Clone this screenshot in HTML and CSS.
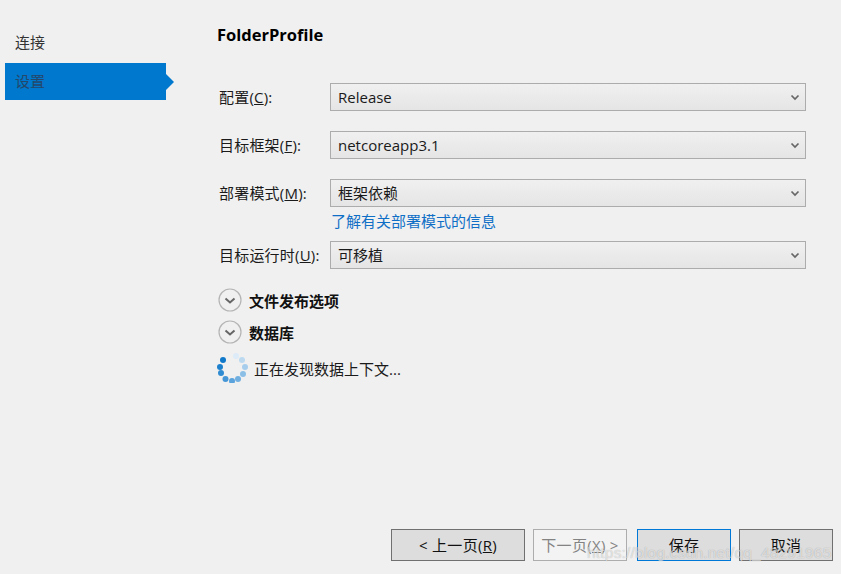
FILE: index.html
```html
<!DOCTYPE html>
<html lang="zh-CN">
<head>
<meta charset="utf-8">
<title>FolderProfile</title>
<link rel="stylesheet" href="styles.css">
</head>
<body>
<div class="app">
  <div class="content">
    <nav class="sidebar">
      <div class="nav-item">连接</div>
      <div class="nav-item active">设置</div>
    </nav>
    <main class="main">
      <h1 class="title">FolderProfile</h1>
      <div class="form">
        <div class="row">
          <label class="label">配置(<u>C</u>):</label>
          <div class="select"><span>Release</span><svg class="chev" width="10" height="7" viewBox="0 0 10 7"><path d="M1.500 1.500 5 5 8.500 1.500" fill="none" stroke="#666" stroke-width="1.700"/></svg></div>
        </div>
        <div class="row">
          <label class="label">目标框架(<u>F</u>):</label>
          <div class="select"><span>netcoreapp3.1</span><svg class="chev" width="10" height="7" viewBox="0 0 10 7"><path d="M1.500 1.500 5 5 8.500 1.500" fill="none" stroke="#666" stroke-width="1.700"/></svg></div>
        </div>
        <div class="row">
          <label class="label">部署模式(<u>M</u>):</label>
          <div class="select"><span class="cjk">框架依赖</span><svg class="chev" width="10" height="7" viewBox="0 0 10 7"><path d="M1.500 1.500 5 5 8.500 1.500" fill="none" stroke="#666" stroke-width="1.700"/></svg></div>
        </div>
        <a class="info-link">了解有关部署模式的信息</a>
        <div class="row">
          <label class="label">目标运行时(<u>U</u>):</label>
          <div class="select"><span class="cjk">可移植</span><svg class="chev" width="10" height="7" viewBox="0 0 10 7"><path d="M1.500 1.500 5 5 8.500 1.500" fill="none" stroke="#666" stroke-width="1.700"/></svg></div>
        </div>
      </div>
      <div class="expander first">
        <svg class="exp-icon" width="24" height="24" viewBox="0 0 24 24"><circle cx="12" cy="12" r="11" fill="none" stroke="#b4b4b4" stroke-width="1.200"/><path d="M7.500 10.500 12 14.500 16.500 10.500" fill="none" stroke="#666" stroke-width="2"/></svg>
        <span>文件发布选项</span>
      </div>
      <div class="expander">
        <svg class="exp-icon" width="24" height="24" viewBox="0 0 24 24"><circle cx="12" cy="12" r="11" fill="none" stroke="#b4b4b4" stroke-width="1.200"/><path d="M7.500 10.500 12 14.500 16.500 10.500" fill="none" stroke="#666" stroke-width="2"/></svg>
        <span>数据库</span>
      </div>
      <div class="status">
        <svg class="spinner" width="32" height="30" viewBox="0 0 32 30">
          <circle cx="19" cy="3" r="3" fill="#dcebf7"/>
          <circle cx="25" cy="7" r="3" fill="#bcd9f0"/>
          <circle cx="28" cy="14" r="3" fill="#a6cdec"/>
          <circle cx="26" cy="21" r="3" fill="#8cbfe6"/>
          <circle cx="21" cy="26" r="3" fill="#70afe0"/>
          <circle cx="15" cy="28" r="3" fill="#5aa3dc"/>
          <circle cx="8.500" cy="26" r="3" fill="#4496d7"/>
          <circle cx="4" cy="20" r="3" fill="#2f8bd2"/>
          <circle cx="3" cy="14" r="3" fill="#1d80cd"/>
          <circle cx="6" cy="7" r="3" fill="#0f78c8"/>
        </svg>
        <span>正在发现数据上下文...</span>
      </div>
    </main>
  </div>
  <footer class="footer">
    <button class="btn prev"><span>&lt; 上一页(<u>R</u>)</span></button>
    <button class="btn next" disabled><span>下一页(<u>X</u>) &gt;</span></button>
    <button class="btn save"><span>保存</span></button>
    <button class="btn cancel"><span>取消</span></button>
  </footer>
  <div class="watermark">https://blog.csdn.net/qq_48291965</div>
</div>
</body>
</html>
```
FILE: styles.css
```css
* { box-sizing: border-box; }
html, body { margin: 0; padding: 0; }
body {
  background: #f0f0f0;
  color: #1a1a1a;
  font-family: "Open Sans", "Noto Sans CJK SC", sans-serif;
  font-size: 15px;
  overflow: hidden;
}
.app {
  position: relative;
  width: 841px;
  height: 574px;
  display: flex;
  flex-direction: column;
  overflow: hidden;
}
.content { flex: 1; display: flex; min-height: 0; }
.sidebar {
  width: 219px;
  flex: none;
  padding: 24px 0 0 5px;
  display: flex;
  flex-direction: column;
  gap: 2px;
}
.nav-item {
  position: relative;
  width: 161px;
  height: 37px;
  line-height: 37px;
  padding-left: 10px;
  color: #333;
  font-size: 15px;
}
.nav-item.active { background: #0078cd; color: #24476a; }
.nav-item.active::after {
  content: "";
  position: absolute;
  left: 100%;
  top: 11px;
  border-left: 8px solid #0078cd;
  border-top: 8px solid transparent;
  border-bottom: 8px solid transparent;
}
.main { flex: 1; min-width: 0; display: flex; flex-direction: column; }
.title {
  margin: 23px 0 0 -2px;
  height: 24px;
  line-height: 24px;
  font-size: 16.500px;
  font-weight: 700;
  color: #000;
}
.form { margin-top: 36px; width: 587px; display: flex; flex-direction: column; }
.row { display: flex; align-items: center; height: 28px; margin-bottom: 20px; }
.label { width: 111px; flex: none; font-size: 15px; white-space: nowrap; letter-spacing: 0.2px; padding-bottom: 2px; }
.select {
  flex: 1;
  height: 28px;
  border: 1px solid #acacac;
  background: linear-gradient(#f0f0f0, #e5e5e5);
  display: flex;
  align-items: center;
  justify-content: space-between;
  padding: 0 5px 0 7px;
  font-size: 15px;
}
.cjk { padding-bottom: 2px; }
.info-link {
  margin: -18px 0 8px 112px;
  height: 24px;
  line-height: 24px;
  color: #0f6fc6;
  font-size: 15px;
}
.expander {
  display: flex;
  align-items: center;
  gap: 7px;
  height: 26px;
  margin: 0 0 6px -1px;
  font-weight: 700;
  font-size: 15px;
  color: #111;
}
.expander.first { margin-top: -2px; }
.status {
  display: flex;
  align-items: center;
  gap: 5px;
  margin: 2px 0 0 -2px;
  height: 30px;
  font-size: 15px;
}
.footer {
  flex: none;
  height: 45px;
  padding: 0 8px 0 391px;
  display: flex;
  align-items: flex-start;
}
.btn {
  height: 32px;
  border: 1px solid #707070;
  background: #dddddd;
  font: inherit;
  font-size: 15px;
  letter-spacing: 0.3px;
  color: #111;
  padding: 0 0 2px;
}
.prev { width: 134px; margin-right: 8px; }
.next { width: 94px; margin-right: 10px; background: #f3f3f3; border-color: #adadad; color: #838383; }
.save { width: 94px; margin-right: 8px; border-color: #0078d7; }
.cancel { width: 94px; }
.watermark {
  position: absolute;
  left: 587px;
  top: 544px;
  font-family: "Liberation Sans", sans-serif;
  font-size: 15.500px;
  letter-spacing: 0.2px;
  color: rgba(255, 255, 255, 0.6);
  text-shadow: 0 0 1px rgba(0, 0, 0, 0.3);
  white-space: nowrap;
}
```
